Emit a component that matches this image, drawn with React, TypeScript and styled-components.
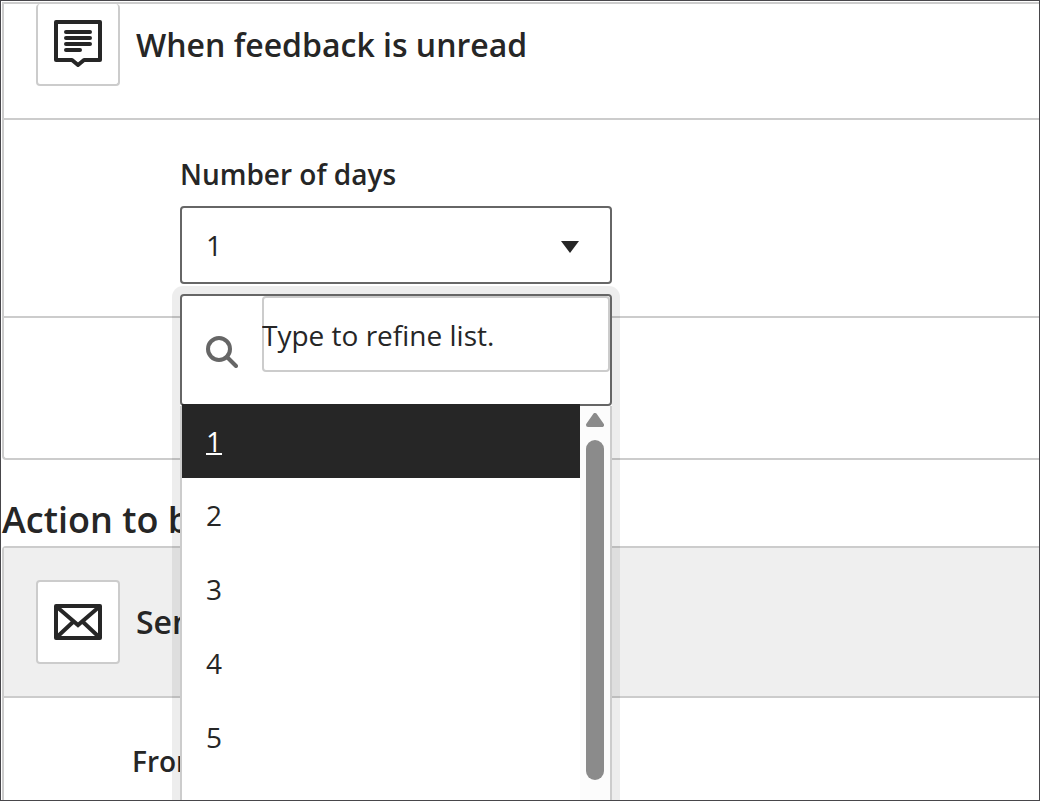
import { useState } from "react";
import styled, { createGlobalStyle } from "styled-components";

const ink = "#262626";
const line = "#cccccc";
const strong = "#666666";

const GlobalStyle = createGlobalStyle`
  *, *::before, *::after { box-sizing: border-box; }
  body {
    margin: 0;
    background: #ffffff;
    color: ${ink};
    font-family: "Open Sans", "Noto Sans", sans-serif;
    font-size: 28px;
    line-height: 38px;
  }
`;

const Frame = styled.main`
  height: calc(100vh - 1px);
  overflow: hidden;
  border: 1px solid #47464a;
  padding: 1px 0 0 1px;
`;

const Card = styled.section<{ $openEnded?: boolean }>`
  border: 2px solid ${line};
  border-right: 0;
  border-radius: ${(p) => (p.$openEnded ? "4px 0 0 0" : "0 0 0 4px")};
  ${(p) => p.$openEnded && "border-bottom: 0;"}
`;

const CardHeader = styled.header<{ $shaded?: boolean; $cut?: boolean }>`
  display: flex;
  align-items: center;
  gap: 16px;
  padding: ${(p) => (p.$cut ? "0 32px 32px" : "32px")};
  background: ${(p) => (p.$shaded ? "#efefef" : "transparent")};
`;

const IconTile = styled.span<{ $cut?: boolean }>`
  display: flex;
  flex: none;
  padding: 16px;
  background: #ffffff;
  border: 2px solid ${line};
  border-radius: 4px;
  ${(p) => p.$cut && "border-top: 0;"}
`;

const CardTitle = styled.h3`
  margin: 0;
  font-size: 32px;
  font-weight: 600;
  line-height: 44px;
`;

const CardRow = styled.div`
  border-top: 2px solid ${line};
`;

const DaysRow = styled(CardRow)`
  display: grid;
  justify-items: start;
  gap: 13px;
  padding: 35px 32px 32px 176px;
`;

const BlankRow = styled(CardRow)`
  min-height: 142px;
`;

const FromRow = styled(CardRow)`
  min-height: 240px;
  padding: 44px 32px 32px 128px;
`;

const FieldLabel = styled.label`
  font-weight: 600;
`;

const FieldName = styled.span`
  font-weight: 600;
`;

const SectionTitle = styled.h2`
  margin: 36px 0 2px;
  font-size: 36px;
  font-weight: 600;
  line-height: 48px;
`;

const SelectWrap = styled.div`
  position: relative;
  width: 432px;
  max-width: 100%;
`;

const Select = styled.select`
  display: block;
  appearance: none;
  width: 100%;
  height: 78px;
  padding: 0 72px 0 24px;
  border: 2px solid ${strong};
  border-radius: 4px;
  background: #ffffff;
  color: ${ink};
  font: inherit;
`;

const Caret = styled.svg`
  position: absolute;
  top: 35px;
  right: 32px;
  pointer-events: none;
`;

const Popup = styled.div`
  position: absolute;
  z-index: 2;
  top: calc(100% + 10px);
  left: 0;
  width: 100%;
  background: #ffffff;
  border-radius: 4px;
  box-shadow: 0 0 0 8px rgba(0, 0, 0, 0.07);
`;

const SearchBox = styled.div`
  display: flex;
  align-items: flex-start;
  height: 112px;
  padding-left: 24px;
  border: 2px solid ${strong};
  border-radius: 4px;
`;

const SearchIcon = styled.svg`
  flex: none;
  margin: 40px 24px 0 0;
`;

const SearchInput = styled.input`
  flex: 1;
  min-width: 0;
  height: 76px;
  padding: 2px 0 0;
  border: 0;
  border-radius: 4px;
  outline: 0;
  background: transparent;
  box-shadow: inset 0 0 0 2px ${line};
  color: ${ink};
  font: inherit;
  &::placeholder { color: ${ink}; opacity: 1; }
`;

const ListArea = styled.div`
  display: flex;
  border: solid ${line};
  border-width: 0 2px 2px;
`;

const Options = styled.ul`
  position: relative;
  flex: 1;
  margin: -2px 0 0;
  padding: 0 0 48px;
  list-style: none;
`;

const Option = styled.li<{ $active: boolean }>`
  padding: 18px 24px;
  cursor: pointer;
  background: ${(p) => (p.$active ? ink : "transparent")};
  color: ${(p) => (p.$active ? "#ffffff" : ink)};
  text-decoration: ${(p) => (p.$active ? "underline" : "none")};
  text-decoration-thickness: 2px;
`;

const ScrollTrack = styled.div`
  display: flex;
  flex-direction: column;
  align-items: center;
  gap: 13px;
  width: 30px;
  padding-top: 7px;
  background: #fcfcfc;
`;

const ScrollThumb = styled.div`
  width: 18px;
  height: 340px;
  border-radius: 9px;
  background: #8b8b8b;
`;

const days = ["1", "2", "3", "4", "5"];

export default function App() {
  const [value, setValue] = useState("1");
  return (
    <>
      <GlobalStyle />
      <Frame>
        <Card>
          <CardHeader $cut>
            <IconTile $cut>
              <svg width="48" height="48" viewBox="0 0 48 48" fill="none" stroke={ink} strokeWidth="4" aria-hidden="true">
                <path d="M2 2H46V40H30L24 45L18 40H2Z" strokeLinejoin="round" />
                <path d="M12 12H36M12 18H36M12 24H36M12 30H26" strokeLinecap="round" />
              </svg>
            </IconTile>
            <CardTitle>When feedback is unread</CardTitle>
          </CardHeader>
          <DaysRow>
            <FieldLabel htmlFor="days">Number of days</FieldLabel>
            <SelectWrap>
              <Select id="days" value={value} onChange={(e) => setValue(e.target.value)}>
                {days.map((d) => (
                  <option key={d}>{d}</option>
                ))}
              </Select>
              <Caret width="20" height="12" viewBox="0 0 20 12" aria-hidden="true">
                <path d="M1 0H19L10 12Z" fill={ink} />
              </Caret>
              <Popup>
                <SearchBox>
                  <SearchIcon width="32" height="32" viewBox="0 0 32 32" fill="none" stroke={strong} strokeWidth="4" aria-hidden="true">
                    <circle cx="13" cy="13" r="11" />
                    <path d="M21 21L30 30" strokeLinecap="round" />
                  </SearchIcon>
                  <SearchInput type="text" aria-label="Type to refine list." placeholder="Type to refine list." />
                </SearchBox>
                <ListArea>
                  <Options role="listbox" aria-label="Number of days">
                    {days.map((d) => (
                      <Option key={d} role="option" aria-selected={d === value} $active={d === value} onClick={() => setValue(d)}>
                        {d}
                      </Option>
                    ))}
                  </Options>
                  <ScrollTrack aria-hidden="true">
                    <svg width="18" height="14" viewBox="0 0 18 14">
                      <path d="M9 2L16 12H2Z" fill="#8b8b8b" stroke="#8b8b8b" strokeWidth="4" strokeLinejoin="round" />
                    </svg>
                    <ScrollThumb />
                  </ScrollTrack>
                </ListArea>
              </Popup>
            </SelectWrap>
          </DaysRow>
          <BlankRow />
        </Card>
        <SectionTitle>Action to b</SectionTitle>
        <Card $openEnded>
          <CardHeader $shaded>
            <IconTile>
              <svg width="48" height="48" viewBox="0 0 48 48" fill="none" stroke={ink} strokeWidth="4" aria-hidden="true">
                <path d="M2 8H46V40H2Z" strokeLinejoin="round" />
                <path d="M3 9L24 27L45 9M3 39L19 24M45 39L29 24" />
              </svg>
            </IconTile>
            <CardTitle>Send</CardTitle>
          </CardHeader>
          <FromRow>
            <FieldName>From</FieldName>
          </FromRow>
        </Card>
      </Frame>
    </>
  );
}
